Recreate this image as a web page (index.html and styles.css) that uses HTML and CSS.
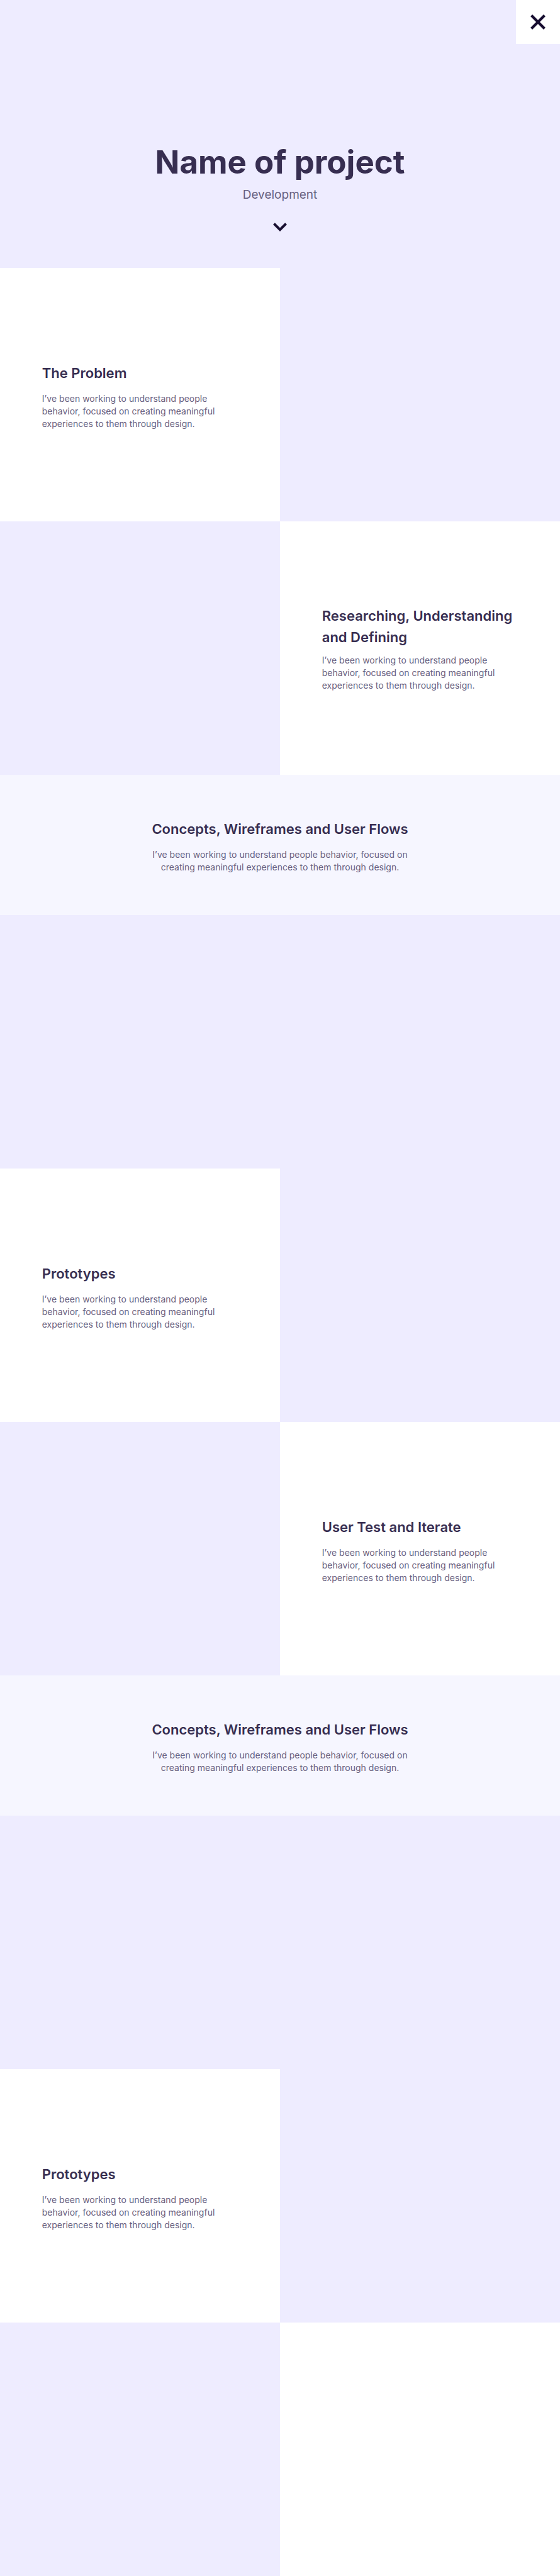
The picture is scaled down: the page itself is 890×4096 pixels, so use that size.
FILE: index.html
```html
<!DOCTYPE html>
<html lang="en">
<head>
  <meta charset="utf-8">
  <meta name="viewport" content="width=device-width, initial-scale=1">
  <title>Name of project</title>
  <link rel="stylesheet" href="styles.css">
</head>
<body>
  <header class="hero">
    <button class="close" type="button" aria-label="Close">
      <svg class="close-icon" viewBox="0 0 34 34" aria-hidden="true"><path d="M2.2 2.2 31.8 31.8M31.8 2.2 2.2 31.8"/></svg>
    </button>
    <h1 class="hero-title">Name of project</h1>
    <p class="hero-subtitle">Development</p>
    <a class="hero-down" href="#content" aria-label="Scroll to content">
      <svg class="down-icon" viewBox="0 0 32 20" aria-hidden="true"><path d="M4.2 0 16 11.7 27.8 0 32 4 16 20 0 4z"/></svg>
    </a>
  </header>
  <main id="content">
    <section class="split">
      <div class="panel">
        <h2 class="title">The Problem</h2>
        <p class="text">I’ve been working to understand people<br>behavior, focused on creating meaningful<br>experiences to them through design.</p>
      </div>
      <div class="media"></div>
    </section>
    <section class="split">
      <div class="media"></div>
      <div class="panel panel-compact">
        <h2 class="title">Researching, Understanding<br>and Defining</h2>
        <p class="text">I’ve been working to understand people<br>behavior, focused on creating meaningful<br>experiences to them through design.</p>
      </div>
    </section>
    <section class="band">
      <h2 class="title">Concepts, Wireframes and User Flows</h2>
      <p class="text">I’ve been working to understand people behavior, focused on<br>creating meaningful experiences to them through design.</p>
    </section>
    <div class="media"></div>
    <section class="split">
      <div class="panel">
        <h2 class="title">Prototypes</h2>
        <p class="text">I’ve been working to understand people<br>behavior, focused on creating meaningful<br>experiences to them through design.</p>
      </div>
      <div class="media"></div>
    </section>
    <section class="split">
      <div class="media"></div>
      <div class="panel">
        <h2 class="title">User Test and Iterate</h2>
        <p class="text">I’ve been working to understand people<br>behavior, focused on creating meaningful<br>experiences to them through design.</p>
      </div>
    </section>
    <section class="band">
      <h2 class="title">Concepts, Wireframes and User Flows</h2>
      <p class="text">I’ve been working to understand people behavior, focused on<br>creating meaningful experiences to them through design.</p>
    </section>
    <div class="media"></div>
    <section class="split">
      <div class="panel">
        <h2 class="title">Prototypes</h2>
        <p class="text">I’ve been working to understand people<br>behavior, focused on creating meaningful<br>experiences to them through design.</p>
      </div>
      <div class="media"></div>
    </section>
    <section class="split">
      <div class="media"></div>
      <div class="panel"></div>
    </section>
  </main>
</body>
</html>
```

FILE: styles.css
```css
:root {
  --lavender: #eeecff;
  --mist: #f6f6ff;
  --ink: #170d30;
  --heading: #372e51;
  --body: #676080;
}

* {
  box-sizing: border-box;
}

body {
  margin: 0;
  background: #fff;
  color: var(--body);
  font-family: Inter, "Open Sans", sans-serif;
}

h1,
h2,
p {
  margin: 0;
}

.hero {
  position: relative;
  display: flex;
  flex-direction: column;
  align-items: center;
  padding: 228px 24px 58px;
  background: var(--lavender);
  text-align: center;
}

.close {
  position: absolute;
  top: 0;
  right: 0;
  display: flex;
  align-items: center;
  justify-content: center;
  width: 70px;
  height: 70px;
  padding: 0;
  border: 0;
  background: #fff;
  cursor: pointer;
}

.close-icon {
  width: 24px;
  height: 24px;
  fill: none;
  stroke: var(--ink);
  stroke-width: 6;
}

.hero-title {
  color: var(--heading);
  font-size: 51px;
  font-weight: 700;
  line-height: 60px;
}

.hero-subtitle {
  margin-top: 10px;
  font-size: 19px;
  line-height: 24px;
}

.hero-down {
  display: flex;
  margin-top: 32px;
}

.down-icon {
  width: 22px;
  height: 14px;
  fill: var(--ink);
}

.split {
  display: grid;
  grid-template-columns: 1fr 1fr;
}

.media {
  min-height: 403px;
  background: var(--lavender);
}

.panel {
  display: flex;
  flex-direction: column;
  justify-content: center;
  gap: 14px;
  padding: 4px 24px 0 15%;
  background: #fff;
}

.panel-compact {
  gap: 10px;
  padding-top: 0;
}

.band {
  display: flex;
  flex-direction: column;
  align-items: center;
  gap: 14px;
  padding: 69px 24px 66px;
  background: var(--mist);
  text-align: center;
}

.title {
  color: var(--heading);
  font-size: 22px;
  font-weight: 600;
  line-height: 34px;
}

.text {
  font-size: 14px;
  line-height: 20px;
}
```
